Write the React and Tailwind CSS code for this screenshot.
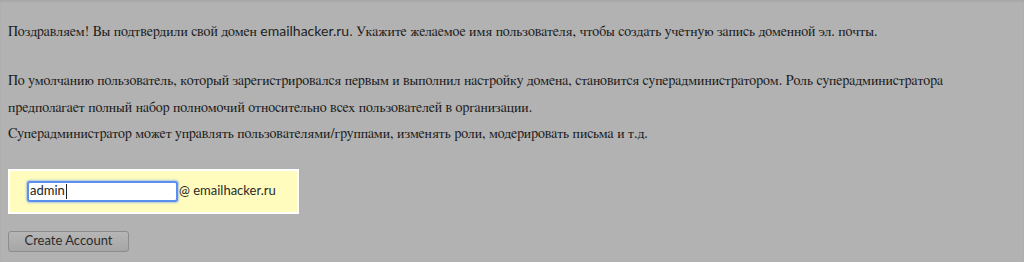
import React from 'react';

const App = () => {
  return (
    <div className="min-h-[262px] w-full bg-[#b2b2b2] shadow-[inset_0_2px_2px_rgba(0,0,0,0.06)] px-2 pt-[18px] text-[14px] text-[#1e1e1e]">
      <p className="font-['Nimbus_Roman','FreeSerif','Liberation_Serif',serif] leading-[26px]">
        Поздравляем! Вы подтвердили свой домен <span className="font-['Lato',sans-serif]">emailhacker.ru</span>. Укажите желаемое имя пользователя, чтобы создать учетную запись доменной эл. почты.
      </p>
      <p className="mt-[23px] font-['Nimbus_Roman','FreeSerif','Liberation_Serif',serif] leading-[26.5px]">
        По умолчанию пользователь, который зарегистрировался первым и выполнил настройку домена, становится суперадминистратором. Роль суперадминистратора
        <br />
        предполагает полный набор полномочий относительно всех пользователей в организации.
        <br />
        Суперадминистратор может управлять пользователями/группами, изменять роли, модерировать письма и т.д.
      </p>
      <div className="mt-[21px] flex h-[45px] w-[291px] items-center border-2 border-white bg-[#fffcbd] pl-[17px] font-['Lato',sans-serif] text-[13px]">
        <div className="flex h-[21px] w-[151px] items-center rounded-[3px] border-2 border-[#5b8ff0] bg-white px-[1px] shadow-[0_0_2px_1px_rgba(120,160,240,0.6)]">
          <span className="text-[#222]">admin</span>
          <span className="ml-[1px] h-[15px] w-px bg-[#222]" />
        </div>
        <span className="ml-[1px] text-[#2a2a2a]">@ emailhacker.ru</span>
      </div>
      <button className="mt-[17px] flex h-[21px] w-[121px] items-center justify-center rounded-[3px] border border-[#8c8c8c] bg-gradient-to-b from-[#b6b6b6] to-[#a6a6a6] font-['Lato',sans-serif] text-[13px] text-[#2c2c2c]">
        Create Account
      </button>
    </div>
  );
};

export default App;
